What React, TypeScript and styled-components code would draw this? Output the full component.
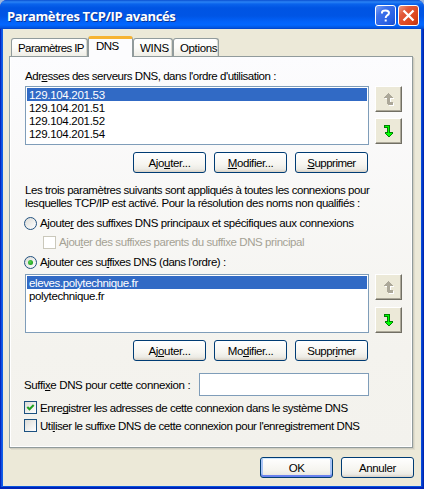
import React from 'react';
import styled, { createGlobalStyle, css } from 'styled-components';

const Global = createGlobalStyle`
  * { box-sizing: border-box; }
  body { margin: 0; background: #9db6dc; }
`;

const Window = styled.div`
  width: 424px;
  height: 489px;
  display: flex;
  flex-direction: column;
  border-radius: 7px 7px 0 0;
  overflow: hidden;
  background: #0831d9;
  font: 11.5px/13px "Liberation Sans", Arial, sans-serif;
  color: #000;
  white-space: nowrap;
`;

const TitleBar = styled.div`
  height: 29px;
  flex: none;
  display: flex;
  align-items: flex-start;
  gap: 2px;
  padding: 5px 5px 0 7px;
  background: linear-gradient(#0a4fd0 0, #2a83f5 2px, #0a63ec 4px, #0054e3 8px, #0055e5 16px, #0263fb 22px, #0267ff 25px, #0253dc 28px, #003fc4 29px);
`;

const Title = styled.h1`
  flex: 1;
  margin: 2px 0 0;
  font: bold 13px/18px "Open Sans", "Noto Sans", sans-serif;
  letter-spacing: -0.34px;
  color: #fff;
  text-shadow: 1px 1px 0 #0a3494;
`;

const CaptionButton = styled.button<{ $close?: boolean }>`
  width: 21px;
  height: 21px;
  padding: 0;
  display: flex;
  align-items: center;
  justify-content: center;
  border: 1px solid #fff;
  border-radius: 3px;
  background: ${(p) =>
    p.$close
      ? 'linear-gradient(135deg, #ee9a80 0%, #e2593a 30%, #da4419 75%, #b83010 100%)'
      : 'linear-gradient(135deg, #7fa3f6 0%, #3f72ea 30%, #265fe4 75%, #1a4cc4 100%)'};
`;

const Frame = styled.div`
  flex: 1;
  display: flex;
  padding: 0 3px 3px;
  background: linear-gradient(90deg, #001ea0 0, #0831d9 1px, #166aee 2px, #0855dd 3px, #0855dd 421px, #0441d8 422px, #001ea0 424px);
  box-shadow: inset 0 -2px 0 #0024b8;
`;

const Client = styled.div`
  flex: 1;
  display: flex;
  flex-direction: column;
  padding: 7px 7px 0 6px;
  background: #ece9d8;
`;

const Tabs = styled.div`
  display: flex;
  align-items: flex-end;
  height: 20px;
  padding-left: 2px;
`;

const Tab = styled.div<{ $w: number; $track: number; $active?: boolean }>`
  width: ${(p) => p.$w}px;
  height: 18px;
  padding: 3px 0 0 6px;
  border: 1px solid #919b9c;
  border-bottom: 0;
  border-radius: 3px 3px 0 0;
  background: linear-gradient(#fff, #fcfcfa 50%, #efeee6);
  box-shadow: inset -1px 0 0 #dad9cf;
  letter-spacing: ${(p) => p.$track}px;
  ${(p) =>
    p.$active &&
    css`
      position: relative;
      height: 21px;
      margin-bottom: -1px;
      padding: 1px 0 0 7px;
      border-top: 3px solid #f6b332;
      background: #fcfcfe;
      box-shadow: none;
    `}
`;

const Panel = styled.div`
  width: 404px;
  height: 392px;
  display: flex;
  flex-direction: column;
  padding: 13px 10px 0 15px;
  border: 1px solid #919b9c;
  border-left-color: #8fa3ae;
  background: linear-gradient(#fcfcfe, #f4f3ee 75%, #f3f2ed);
  box-shadow: 1px 1px 0 #d0cec0, 2px 2px 0 #e0ddcd, inset -1px -1px 0 #fff, inset 1px 0 0 #fff;
`;

const Text = styled.span<{ $track: number }>`
  letter-spacing: ${(p) => p.$track}px;
`;

const Key = styled.u`
  text-decoration: underline 1px;
  text-underline-offset: 1px;
  text-decoration-skip-ink: none;
`;

const Paragraph = styled.div`
  height: 26px;
  margin-top: 11px;
  display: flex;
  flex-direction: column;
`;

const ListRow = styled.div<{ $top: number; $gap: number }>`
  height: 59px;
  display: flex;
  gap: 6px;
  margin-top: ${(p) => p.$top}px;

  > :last-child {
    gap: ${(p) => p.$gap}px;
  }
`;

const ListBox = styled.div`
  width: 344px;
  padding: 1px;
  border: 1px solid #7f9db9;
  background: #fff;
`;

const Item = styled.div<{ $track: number; $selected?: boolean }>`
  height: 13px;
  padding-left: 2px;
  line-height: 15px;
  letter-spacing: ${(p) => p.$track}px;
  background: ${(p) => (p.$selected ? '#316ac5' : 'transparent')};
  color: ${(p) => (p.$selected ? '#fff' : '#000')};
`;

const Movers = styled.div`
  display: flex;
  flex-direction: column;
`;

const MoveButton = styled.button`
  width: 27px;
  height: 26px;
  padding: 0;
  display: flex;
  align-items: center;
  justify-content: center;
  border: 1px solid;
  border-color: #fff #716f64 #716f64 #fff;
  background: #ece9d8;
  box-shadow: inset -1px -1px 0 #aca899;
`;

const ButtonRow = styled.div<{ $top: number; $left: number }>`
  display: flex;
  gap: 8px;
  margin: ${(p) => p.$top}px 0 0 ${(p) => p.$left}px;
`;

const Button = styled.button<{ $track: number; $default?: boolean }>`
  width: 73px;
  height: 21px;
  padding: 1px 0 0;
  border: 1px solid #003c74;
  border-radius: 3px;
  background: linear-gradient(#fff, #f6f5f0 60%, #ecebe5 85%, #d8d0c4);
  box-shadow: ${(p) =>
    p.$default ? 'inset 0 1px 0 #cee7ff, inset 0 -2px 0 #6982ee, inset 2px 0 0 #a9c4f5, inset -2px 0 0 #a9c4f5' : 'none'};
  font: inherit;
  letter-spacing: ${(p) => p.$track}px;
  color: #000;
`;

const Option = styled.label<{ $top: number; $left?: number; $disabled?: boolean; $drop?: number }>`
  height: 13px;
  display: flex;
  gap: 3px;
  margin: ${(p) => p.$top}px 0 0 ${(p) => (p.$left ?? 0) - 1}px;
  color: ${(p) => (p.$disabled ? '#a5a294' : '#000')};

  > span {
    margin-top: ${(p) => p.$drop ?? 0}px;
  }
`;

const Radio = styled.i`
  width: 13px;
  height: 13px;
  display: flex;
  align-items: center;
  justify-content: center;
  border: 1px solid #21517f;
  border-radius: 50%;
  background: linear-gradient(135deg, #dcdcd7, #fff);
`;

const Dot = styled.i`
  width: 5px;
  height: 5px;
  border-radius: 50%;
  background: radial-gradient(circle at 40% 40%, #55d551, #21a121 70%);
`;

const Box = styled.i<{ $disabled?: boolean }>`
  width: 13px;
  height: 13px;
  display: flex;
  align-items: center;
  justify-content: center;
  border: 1px solid ${(p) => (p.$disabled ? '#cac8bb' : '#1c5180')};
  background: ${(p) => (p.$disabled ? '#fff' : 'linear-gradient(135deg, #dcdcd7, #fff)')};
`;

const Field = styled.div`
  display: flex;
  align-items: flex-start;
  justify-content: space-between;
  width: 345px;
  margin: 12px 0 0 -1px;

  > span {
    margin-top: 6px;
  }
`;

const Input = styled.input`
  width: 170px;
  height: 23px;
  border: 1px solid #7f9db9;
  background: #fff;
`;

const UpIcon = () => (
  <svg width="12" height="14" shapeRendering="crispEdges">
    <path d="M6 2h1v1h1v1h1v1h1v1h1v1H8v4h3v3H6v-1H5V7H2V6h8V5H6z" fill="#fff" />
    <path d="M5 1h1v1h1v1h1v1h1v1h1v1H7v4h3v3H5v-1H4V6H1V5h1V4h1V3h1V2h1z" fill="#aca899" />
  </svg>
);

const DownIcon = () => (
  <svg width="12" height="14" shapeRendering="crispEdges">
    <path d="M1 1h6v7h3v2H9v1H8v1H7v1H5v-1H4v-1H3v-1H2V8h2V4H1z" fill="#008000" />
    <path d="M2 2h4v7h3v1H8v1H7v1H5v-1H4v-1H3V9h2V3H2z" fill="#0f0" />
  </svg>
);

const Mover = ({ down }: { down?: boolean }) => <MoveButton>{down ? <DownIcon /> : <UpIcon />}</MoveButton>;

export default function App() {
  return (
    <Window>
      <Global />
      <TitleBar>
        <Title>Paramètres TCP/IP avancés</Title>
        <CaptionButton>
          <svg width="19" height="19" fill="none" stroke="#fff" strokeWidth="2">
            <path d="M6 7.5V6.5Q6 4.5 9.5 4.5Q13 4.5 13 7Q13 8.5 11 9.5Q9.7 10.3 9.7 12M9.7 13.5V15.5" />
          </svg>
        </CaptionButton>
        <CaptionButton $close>
          <svg width="19" height="19" stroke="#fff" strokeWidth="2.3">
            <path d="M4.5 4.5L14.5 14.5M14.5 4.5L4.5 14.5" />
          </svg>
        </CaptionButton>
      </TitleBar>
      <Frame>
        <Client>
          <Tabs>
            <Tab $w={77} $track={-0.58}>Paramètres IP</Tab>
            <Tab $w={45} $track={-0.5} $active>DNS</Tab>
            <Tab $w={40} $track={-0.3}>WINS</Tab>
            <Tab $w={46} $track={-0.36}>Options</Tab>
          </Tabs>
          <Panel>
            <Text $track={-0.47}>Adr<Key>e</Key>sses des serveurs DNS, dans l'ordre d'utilisation :</Text>
            <ListRow $top={3} $gap={6}>
              <ListBox>
                <Item $track={-0.3} $selected>129.104.201.53</Item>
                <Item $track={-0.3}>129.104.201.51</Item>
                <Item $track={-0.3}>129.104.201.52</Item>
                <Item $track={-0.3}>129.104.201.54</Item>
              </ListBox>
              <Movers>
                <Mover />
                <Mover down />
              </Movers>
            </ListRow>
            <ButtonRow $top={7} $left={108}>
              <Button $track={-0.33}>Ajo<Key>u</Key>ter...</Button>
              <Button $track={-0.4}><Key>M</Key>odifier...</Button>
              <Button $track={-0.53}><Key>S</Key>upprimer</Button>
            </ButtonRow>
            <Paragraph>
              <Text $track={-0.45}>Les trois paramètres suivants sont appliqués à toutes les connexions pour</Text>
              <Text $track={-0.425}>lesquelles TCP/IP est activé. Pour la résolution des noms non qualifiés :</Text>
            </Paragraph>
            <Option $top={7}>
              <Radio />
              <Text $track={-0.405}>Ajoute<Key>r</Key> des suffixes DNS principaux et spécifiques aux connexions</Text>
            </Option>
            <Option $top={6} $left={19} $disabled>
              <Box $disabled />
              <Text $track={-0.42}>Ajou<Key>t</Key>er des suffixes parents du suffixe DNS principal</Text>
            </Option>
            <Option $top={7}>
              <Radio><Dot /></Radio>
              <Text $track={-0.445}>Ajouter ces su<Key>f</Key>fixes DNS (dans l'ordre) :</Text>
            </Option>
            <ListRow $top={5} $gap={7}>
              <ListBox>
                <Item $track={-0.38} $selected>eleves.polytechnique.fr</Item>
                <Item $track={-0.38}>polytechnique.fr</Item>
              </ListBox>
              <Movers>
                <Mover />
                <Mover down />
              </Movers>
            </ListRow>
            <ButtonRow $top={7} $left={108}>
              <Button $track={-0.33}>Aj<Key>o</Key>uter...</Button>
              <Button $track={-0.4}>Mo<Key>d</Key>ifier...</Button>
              <Button $track={-0.53}>Suppr<Key>i</Key>mer</Button>
            </ButtonRow>
            <Field>
              <Text $track={-0.37}>Suffi<Key>x</Key>e DNS pour cette connexion :</Text>
              <Input />
            </Field>
            <Option $top={5} $drop={1}>
              <Box>
                <svg width="9" height="9" fill="none" stroke="#21a121" strokeWidth="2">
                  <path d="M1.3 4L3.5 6.3L7.7 2" />
                </svg>
              </Box>
              <Text $track={-0.475}>Enre<Key>g</Key>istrer les adresses de cette connexion dans le système DNS</Text>
            </Option>
            <Option $top={5} $drop={1}>
              <Box />
              <Text $track={-0.435}>Uti<Key>l</Key>iser le suffixe DNS de cette connexion pour l'enregistrement DNS</Text>
            </Option>
          </Panel>
          <ButtonRow $top={9} $left={251}>
            <Button $track={-0.5} $default>OK</Button>
            <Button $track={-0.36}>Annuler</Button>
          </ButtonRow>
        </Client>
      </Frame>
    </Window>
  );
}
